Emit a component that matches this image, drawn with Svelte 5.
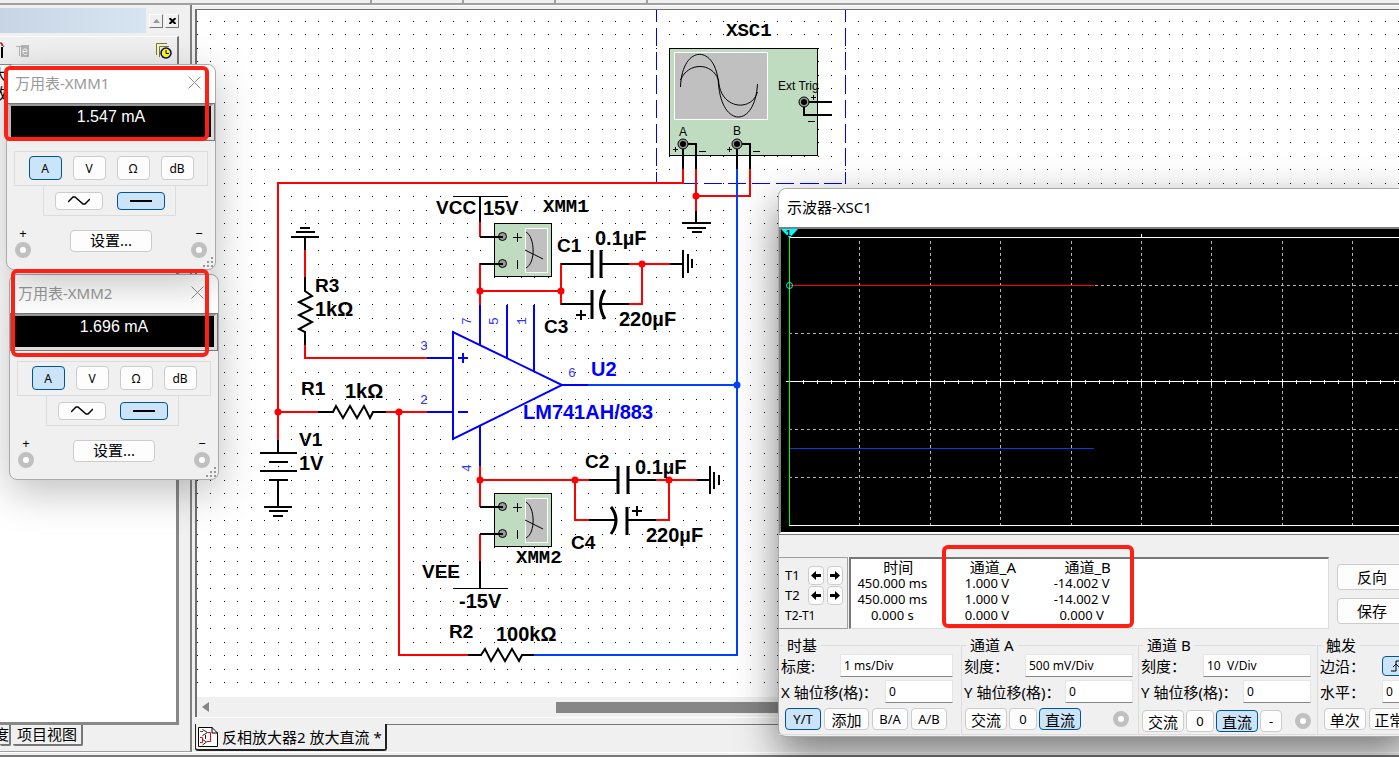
<script>
    let meters = [
        { id: 'one', name: 'XMM1', reading: '1.547 mA' },
        { id: 'two', name: 'XMM2', reading: '1.696 mA' }
    ];
    let ranges = ['A', 'V', 'Ω', 'dB'];

    let readings = [
        ['450.000 ms', '1.000 V', '-14.002 V'],
        ['450.000 ms', '1.000 V', '-14.002 V'],
        ['0.000 s', '0.000 V', '0.000 V']
    ];

    let channels = [
        { id: 'a', title: '通道 A', scale: '500 mV/Div', buttons: ['交流', '0', '直流'] },
        { id: 'b', title: '通道 B', scale: '10  V/Div', buttons: ['交流', '0', '直流', '-'] }
    ];

    // scope divisions
    let cols = [78, 149, 219, 290, 360, 430, 501, 571, 642];
    let rows = [56, 104, 200, 248];
    let ticks = Array.from({ length: 50 }, (_, i) => Math.round(8 + i * 14.08));

    let labels = [
        [436, 214, 'VCC'], [557, 252, 'C1'], [544, 333, 'C3'], [315, 292, 'R3'],
        [301, 395, 'R1'], [299, 446, 'V1'], [585, 468, 'C2'], [571, 549, 'C4'],
        [422, 578, 'VEE'], [449, 638, 'R2']
    ];
    let values = [
        [483, 215, '15V'], [595, 245, '0.1µF'], [619, 326, '220µF'], [315, 316, '1kΩ'],
        [345, 398, '1kΩ'], [299, 470, '1V'], [635, 474, '0.1µF'], [646, 542, '220µF'],
        [459, 608, '-15V'], [496, 641, '100kΩ']
    ];
    let redNodes = [[696, 196], [480, 291], [561, 291], [642, 264], [278, 412], [399, 412], [480, 480], [575, 480], [669, 480]];
</script>

<div class="app">
    <div class="topbar"><i></i><i></i><i></i><i></i></div>
    <div class="work">
        <aside class="side">
            <div class="side__head">
                <div class="side__title"></div>
                <button class="mini mini--off" aria-label="up"><svg width="7" height="4"><path d="M0 4L3.500 0L7 4z" fill="#999"/></svg></button>
                <button class="mini" aria-label="close"><svg width="7" height="6"><path d="M0.500 0L6.500 6M6.500 0L0.500 6" stroke="#000" stroke-width="2"/></svg></button>
            </div>
            <div class="side__tools">
                <svg width="32" height="18">
                    <path d="M2 5V16" stroke="#000" stroke-width="2"/><path d="M0 1H2V4M1 1L4 5" stroke="#a00000" stroke-width="1" fill="none"/>
                    <path d="M16 4.500H23M19.500 4V14" stroke="#b4b4b4"/><rect x="21" y="3" width="8" height="12" fill="#b4b4b4"/>
                    <path d="M23 9.500H27C27 6 23 6 23 9.500C23 13 26 13 27 12" stroke="#fff" fill="none"/>
                </svg>
                <svg width="16" height="16">
                    <path d="M0.500 12V0.500H11M3.500 14V3.500H13M6.500 15V6.500" stroke="#808000" fill="none"/>
                    <circle cx="10" cy="10" r="5" fill="#ff0" stroke="#00008b" stroke-width="1.500"/>
                    <path d="M10 7V10.500H13" stroke="#000" fill="none"/>
                </svg>
            </div>
            <div class="tree"><span>大</span><span>放</span></div>
            <div class="side__tabs">
                <button class="cut">度</button>
                <button>项目视图</button>
            </div>
        </aside>

        <main class="doc">
            <div class="sheet">
                <svg class="schematic" width="100%" height="100%">
                    <defs>
                        <pattern id="dots" x="197" y="21" width="27" height="27" patternUnits="userSpaceOnUse">
                            <path d="M0 0h1v1h-1zM13 0h1v1h-1zM0 13h1v1h-1zM13 13h1v1h-1z" fill="#000"/>
                        </pattern>
                        <g id="xmm">
                            <rect x="0.500" y="0.500" width="57" height="53" fill="#c0dcc0" stroke="#000"/>
                            <rect x="31.500" y="5.500" width="22" height="44" fill="#c0c0c0" stroke="#fff"/>
                            <g fill="#999" stroke="#000"><circle cx="8.500" cy="13.500" r="4"/><circle cx="8.500" cy="40.500" r="4"/></g>
                            <path d="M-14 14H9M-14 41H9" stroke="#000" stroke-width="2"/>
                            <path d="M19 14.500H28M23.500 10V19M23.500 37V46M31 27L49 36M32 9C41 14 42 40 32 45" stroke="#000" fill="none"/>
                        </g>
                        <g id="jack"><circle r="5" fill="#999" stroke="#000"/><circle r="3" fill="#000"/></g>
                    </defs>
                    <g transform="translate(-197 -10)">
                        <rect x="197" y="10" width="4000" height="685" fill="url(#dots)"/>

                        <!-- oscilloscope symbol -->
                        <path d="M656.500 10V183M845.500 10V183" stroke="#00f" stroke-dasharray="18 6" stroke-dashoffset="6"/>
                        <path d="M656 183.500H845" stroke="#00f" stroke-dasharray="18 6"/>
                        <rect x="669.500" y="48.500" width="148" height="107" fill="#c0dcc0" stroke="#000"/>
                        <rect x="674.500" y="52.500" width="93" height="67" fill="#c0c0c0" stroke="#fff"/>
                        <path d="M680.500 87C682 44 716 44 718.500 84C722 128 755 128 757.500 84M680.500 80C688 62 712 62 718.500 80C720 110 752 112 757.500 92" stroke="#000" fill="none"/>
                        <path class="blk" d="M683 144V169M688 144H696V169M737 144V169M742 144H750V169M804 102H832M804 102V115H832"/>
                        <use href="#jack" x="683" y="144"/><use href="#jack" x="737" y="144"/><use href="#jack" x="804" y="102"/>
                        <path d="M673 149.500H678M675.500 147V152M727 149.500H732M729.500 147V152M811 97.500H816M813.500 95V100M699 151.500H706M753 151.500H760M808 121.500H815" stroke="#000"/>
                        <g class="tiny"><text x="679" y="136">A</text><text x="733" y="135">B</text><text x="778" y="90">Ext Trig</text></g>

                        <!-- wires -->
                        <path class="red" d="M683 169V183H278V440M696 169V211M750 169V196H696M480 222V237M480 263V305M480 291H561M561 263V305M629 264H670M642 263V304H629M305 250V277M305 345V358H427M278 412H318M386 412H427M399 412V655H468M480 466V507M480 480H589M575 480V520H589M656 480H697M669 480V520H656M480 534V561"/>
                        <path class="net" d="M737 169V655H534M588 385H737"/>
                        <path class="blue" d="M480 305V345M507 305V358M534 305V372M453 332V439L562 385ZM427 358H453M427 412H453M562 385H588M480 427V466M458 358H468M463 353V363M458 412H468"/>
                        <path class="blk" d="M696 211V223M682 223H711M687 228H706M692 232H702
                            M480 196V222M480 588V561
                            M305 237V250M291 237H319M296 232H315M300 228H310M305 277V291L312 296L299 302L312 309L299 315L312 322L299 329L305 332V345
                            M318 412H333L336 406L343 418L350 406L357 418L364 406L370 418L373 412H386
                            M278 440V453M260 453H297M269 462H288M260 471H297M269 480H288M278 480V507M264 507H292M269 511H288M273 516H283
                            M468 655H481L485 649L491 661L498 649L505 661L512 649L519 661L522 655H534
                            M561 264H592M601 264H629M561 304H592M601 304H629M670 264H683M683 250V278M688 254V273M692 259V268
                            M589 480H618M628 480H656M589 520H616M627 520H656M697 480H710M710 466V494M714 472V489M719 475V485
                            M576 315H586M581 310V320M632 511H642M637 506V516"/>
                        <path d="M453 196.500H508M453 588.500H508" stroke="#000"/>
                        <path class="plate" d="M592 250V278M601 250V278M592 290V319M605 290Q596 304 605 319M618 466V494M628 466V494M627 507V535M611 507Q621 520 611 534"/>
                        <g fill="red">
                            {#each redNodes as n}
                                <circle cx={n[0]} cy={n[1]} r="3.500"/>
                            {/each}
                        </g>
                        <circle cx="737" cy="385" r="3.500" fill="#0040ff"/>
                        <use href="#xmm" x="494" y="223"/>
                        <use href="#xmm" x="494" y="493"/>

                        <g class="name">
                            {#each labels as l}
                                <text x={l[0]} y={l[1]}>{l[2]}</text>
                            {/each}
                        </g>
                        <g class="name value">
                            {#each values as v}
                                <text x={v[0]} y={v[1]}>{v[2]}</text>
                            {/each}
                        </g>
                        <g class="name value part"><text x="591" y="376">U2</text><text x="523" y="419">LM741AH/883</text></g>
                        <g class="inst"><text x="726" y="36">XSC1</text><text x="543" y="212">XMM1</text><text x="516" y="563">XMM2</text></g>
                        <g class="pin">
                            <text x="420" y="350">3</text><text x="420" y="404">2</text><text x="568" y="377">6</text>
                            <text transform="translate(471 325) rotate(-90)">7</text>
                            <text transform="translate(498 325) rotate(-90)">5</text>
                            <text transform="translate(526 325) rotate(-90)">1</text>
                            <text transform="translate(471 472) rotate(-90)">4</text>
                        </g>
                    </g>
                </svg>
            </div>
            <div class="scroll">
                <svg width="8" height="10"><path d="M7 0V10L0 5z" fill="#868686"/></svg>
                <div class="thumb"></div>
            </div>
            <div class="tabs">
                <button class="tab">
                    <svg width="20" height="20">
                        <path d="M0.500 0.500H14L19.500 6V19.500H0.500z" fill="#fff" stroke="#000"/><path d="M14 0V6H20" fill="none" stroke="#000"/>
                        <path d="M2 4.500H5M2 10.500H4.500V15.500H2M10 5.500H12.500V14.500H9" stroke="#f00" fill="none"/>
                        <path d="M4.500 2.500L9.500 5.500L4.500 8.500M4.500 12.500L8.500 15L4.500 18M7.500 8V12" stroke="#222" fill="none"/>
                    </svg>
                    反相放大器2 放大直流 *
                </button>
                <div class="tabs__rest"></div>
            </div>
        </main>
    </div>
    <div class="status"></div>

    {#each meters as m}
        <section class="window meter meter--{m.id}">
            <header class="window__title">
                <span>万用表-{m.name}</span>
                <button class="close" aria-label="close"><svg width="13" height="13"><path d="M0.500 0.500L12.500 12.500M12.500 0.500L0.500 12.500" stroke="#8c8c8c"/></svg></button>
            </header>
            <output class="lcd">{m.reading}</output>
            <div class="ranges">
                {#each ranges as r}
                    <button class="btn" class:on={r == 'A'}>{r}</button>
                {/each}
            </div>
            <div class="modes">
                <button class="btn" aria-label="AC"><svg width="22" height="9"><path d="M0 6L5 1H7L15 8H17L22 3" fill="none" stroke="#000" stroke-width="1.500"/></svg></button>
                <button class="btn on" aria-label="DC"><svg width="22" height="2"><path d="M0 1H22" stroke="#000" stroke-width="2"/></svg></button>
            </div>
            <div class="foot">
                <div class="pole"><span>+</span><input type="radio" aria-label="plus"></div>
                <button class="btn set">设置...</button>
                <div class="pole"><span>−</span><input type="radio" aria-label="minus"></div>
            </div>
            <svg class="grip" width="12" height="12"><path d="M8 0h2v2h-2zM4 4h2v2h-2zM8 4h2v2h-2zM0 8h2v2h-2zM4 8h2v2h-2zM8 8h2v2h-2z" fill="#999"/></svg>
        </section>
    {/each}

    <section class="window scope">
        <header class="window__title">示波器-XSC1</header>
        <div class="screen">
            <svg width="100%" height="303">
                <g stroke="#b4b4b4" fill="none">
                    {#each cols as x}
                        <path d="M{x}.5 12V296" stroke-dasharray="3 3"/>
                    {/each}
                    {#each rows as y}
                        <path d="M8 {y}.5H900" stroke-dasharray="3 3"/>
                    {/each}
                </g>
                <g stroke="#fff">
                    <path d="M8 8.500H900M8 296.500H900M5 152.500H900M360.500 5V8"/>
                    {#each ticks as t}
                        <path d="M{t}.5 151V155"/>
                    {/each}
                    {#each cols as x}
                        <path d="M{x}.5 150V157"/>
                    {/each}
                </g>
                <path d="M8 56.500H313" stroke="#f00"/>
                <path d="M8 219.500H313" stroke="#0040e0"/>
                <path d="M8.500 8V296" stroke="#0f0"/>
                <path d="M0 0H17L8.500 9z" fill="#0ff"/>
                <text class="cursor" x="5" y="7">1</text>
                <circle cx="8.500" cy="56.500" r="3" fill="none" stroke="#0ff"/>
            </svg>
        </div>
        <div class="readout">
            <div class="cursors">
                {#each ['T1', 'T2'] as t}
                    <div class="cursors__row">
                        <span>{t}</span>
                        <button class="btn" aria-label="{t} left"><svg width="10" height="9"><path d="M0 4.500L5 0V3H10V6H5V9z"/></svg></button>
                        <button class="btn" aria-label="{t} right"><svg width="10" height="9"><path d="M10 4.500L5 0V3H0V6H5V9z"/></svg></button>
                    </div>
                {/each}
                <div class="diff">T2-T1</div>
            </div>
            <div class="sheetbox">
                <table>
                    <thead><tr><th>时间</th><th>通道_A</th><th>通道_B</th></tr></thead>
                    <tbody>
                        {#each readings as r}
                            <tr>{#each r as c}<td>{c}</td>{/each}</tr>
                        {/each}
                    </tbody>
                </table>
            </div>
            <div class="actions">
                <button class="btn">反向</button>
                <button class="btn">保存</button>
            </div>
        </div>
        <div class="groups">
            <fieldset class="time">
                <legend>时基</legend>
                <div class="line"><label for="tb">标度:</label><input id="tb" class="wide" value="1 ms/Div"></div>
                <div class="line"><label for="tx">X 轴位移(格)：</label><input id="tx" value="0"></div>
                <div class="keys">
                    <button class="btn on">Y/T</button><button class="btn zh">添加</button><button class="btn">B/A</button><button class="btn">A/B</button>
                </div>
            </fieldset>
            {#each channels as ch}
                <fieldset class="ch ch--{ch.id}">
                    <legend>{ch.title}</legend>
                    <div class="line"><label for="s{ch.id}">刻度：</label><input id="s{ch.id}" class="wide" value={ch.scale}></div>
                    <div class="line"><label for="y{ch.id}">Y 轴位移(格)：</label><input id="y{ch.id}" value="0"></div>
                    <div class="keys">
                        {#each ch.buttons as b}
                            <button class="btn" class:zh={b.length > 1} class:on={b == '直流'}>{b}</button>
                        {/each}
                        <input type="radio" aria-label={ch.title}>
                    </div>
                </fieldset>
            {/each}
            <fieldset class="trig">
                <legend>触发</legend>
                <div class="line"><span>边沿：</span><button class="btn on" aria-label="rising edge"><svg width="10" height="12"><path d="M0 11H5V1H10M2 7L5 4L8 7" fill="none" stroke="#000"/></svg></button></div>
                <div class="line"><label for="lv">水平：</label><input id="lv" value="0"></div>
                <div class="keys"><button class="btn zh">单次</button><button class="btn zh">正常</button></div>
            </fieldset>
        </div>
    </section>

    <div class="mark mark--one"></div>
    <div class="mark mark--two"></div>
    <div class="mark mark--three"></div>
</div>

<style>
    :global(body){
        margin: 0;
    }
    .app, .app *{
        box-sizing: border-box;
    }
    .app{
        height: 100vh;
        position: relative;
        overflow: hidden;
        display: flex;
        flex-direction: column;
        background: #f0f0f0;
        color: #000;
        font: 13px "Noto Sans", "Noto Sans CJK SC", sans-serif;
    }
    button, input{
        font: inherit;
        color: inherit;
        padding: 0;
        margin: 0;
    }
    svg{
        display: block;
        flex: none;
    }
    .topbar{
        height: 5px;
        border-bottom: 2px solid #a0a0a0;
        display: flex;
        padding-left: 370px;
        gap: 90px;
    }
    .topbar i{
        width: 2px;
        background: #a0a0a0;
    }
    .work{
        flex: 1;
        min-height: 0;
        display: flex;
    }
    .side{
        width: 192px;
        border-right: 2px solid #808080;
        border-bottom: 1px solid #a0a0a0;
        display: flex;
        flex-direction: column;
        padding: 3px 11px 5px 0;
    }
    .side__head{
        display: flex;
        gap: 2px;
        align-items: center;
        height: 25px;
    }
    .side__title{
        flex: 1;
        height: 25px;
        margin-right: 1px;
        background: linear-gradient(90deg, #c8d5e4, #d7e4f2);
    }
    .mini{
        width: 14px;
        height: 14px;
        display: flex;
        align-items: center;
        justify-content: center;
        background: #f0f0f0;
        border: 1px solid;
        border-color: #fff #777 #777 #fff;
    }
    .side__tools{
        height: 28px;
        margin-top: 3px;
        border-top: 1px solid #fff;
        border-right: 2px solid #777;
        display: flex;
        justify-content: space-between;
        align-items: center;
        padding-right: 5px;
    }
    .tree{
        flex: 1;
        background: #fff;
        border: solid #888;
        border-width: 1px 3px 3px 0;
        display: flex;
        flex-direction: column;
        font-size: 15px;
        line-height: 19px;
    }
    .tree span{
        text-indent: -8px;
    }
    .side__tabs{
        display: flex;
        gap: 2px;
        height: 21px;
    }
    .side__tabs button{
        background: #f0f0f0;
        border: solid #777;
        border-width: 0 2px 2px 0;
        border-radius: 0 0 2px 2px;
        width: 70px;
        font-size: 15px;
        line-height: 19px;
        white-space: nowrap;
    }
    .side__tabs .cut{
        width: 11px;
        direction: rtl;
        overflow: hidden;
    }
    .doc{
        flex: 1;
        min-width: 0;
        display: flex;
        flex-direction: column;
        padding: 3px 0 0 3px;
        border-top: 1px solid #fff;
    }
    .sheet{
        flex: 1;
        min-height: 0;
        overflow: hidden;
        background: #fff;
        border: solid #707070;
        border-width: 1px 0 0 2px;
    }
    .schematic{
        overflow: hidden;
    }
    .blk, .red, .net, .blue{
        fill: none;
        stroke: #000;
        stroke-width: 2;
    }
    .red{stroke: #f00}
    .net{stroke: #0040ff}
    .blue{stroke: #00f}
    .plate{
        fill: none;
        stroke: #000;
        stroke-width: 3;
    }
    .name{
        font: bold 19px "Liberation Sans", Arial, sans-serif;
    }
    .value{
        font-size: 20px;
    }
    .part{
        fill: #00f;
    }
    .inst{
        font: bold 19px "Liberation Mono", "Courier New", monospace;
    }
    .tiny{
        font: 12px "Liberation Sans", Arial, sans-serif;
    }
    .pin{
        font: 13px "Liberation Mono", monospace;
        fill: #33f;
    }
    .scroll{
        height: 20px;
        border-left: 2px solid #707070;
        display: flex;
        align-items: center;
        padding-left: 5px;
    }
    .thumb{
        height: 11px;
        width: 40%;
        margin-left: 346px;
        background: #868686;
    }
    .tabs{
        height: 35px;
        border-top: 1px solid #fff;
        padding-top: 6px;
        display: flex;
    }
    .tab{
        height: 27px;
        background: #f0f0f0;
        border: solid #222;
        border-width: 0 2px 2px 1px;
        border-radius: 0 0 3px 3px;
        display: flex;
        gap: 4px;
        align-items: center;
        padding: 0 3px 0 2px;
        font-size: 15px;
        white-space: nowrap;
    }
    .tabs__rest{
        flex: 1;
        border-top: 1px solid #777;
    }
    .status{
        height: 5px;
        border-top: 1px solid #fff;
        border-bottom: 2px solid #777;
    }

    .window{
        position: absolute;
        background: #f0f0f0;
        border: 1px solid #aaa;
        border-radius: 8px;
        display: flex;
        flex-direction: column;
    }
    .window__title{
        height: 38px;
        flex: none;
        background: #fff;
        border-radius: 8px 8px 0 0;
        display: flex;
        align-items: center;
        justify-content: space-between;
        padding: 0 14px 4px 8px;
        font-size: 15px;
    }
    .meter{
        width: 210px;
        box-shadow: 0 12px 40px rgba(0, 0, 0, .25);
    }
    .meter--one{
        left: 6px;
        top: 64px;
        z-index: 2;
    }
    .meter--two{
        left: 9px;
        top: 274px;
        z-index: 1;
    }
    .meter .window__title{
        color: #999;
    }
    .close{
        border: 0;
        background: none;
    }
    .lcd{
        height: 38px;
        background: #000;
        color: #fff;
        border: solid #999;
        border-width: 3px 4px 4px 4px;
        border-color: #999 #ddd #ddd #bbb;
        outline: 1px solid #777;
        outline-offset: -1px;
        text-align: center;
        font: 16px/22px "Liberation Sans", Arial, sans-serif;
    }
    .btn{
        background: #fdfdfd;
        border: 1px solid #ccc;
        border-radius: 4px;
        display: flex;
        align-items: center;
        justify-content: center;
        white-space: nowrap;
    }
    .on{
        background: #cce4f7;
        border-color: #005499;
    }
    .ranges{
        margin: 10px 7px 0;
        height: 35px;
        border: 1px solid #dcdcdc;
        display: flex;
        gap: 11px;
        justify-content: center;
        align-items: center;
        padding-bottom: 1px;
    }
    .ranges .btn{
        width: 33px;
        height: 24px;
        font-size: 12px;
    }
    .modes{
        width: 133px;
        margin-left: 36px;
        height: 30px;
        border: 1px solid #dcdcdc;
        border-top: 0;
        display: flex;
        justify-content: space-between;
        align-items: center;
        padding: 0 10px 0 11px;
    }
    .modes .btn{
        width: 48px;
        height: 18px;
    }
    .foot{
        display: flex;
        justify-content: space-between;
        align-items: center;
        padding: 4px 8px 8px;
        height: 53px;
    }
    .set{
        width: 82px;
        height: 22px;
        font-size: 15px;
        padding-bottom: 2px;
    }
    .pole{
        display: flex;
        flex-direction: column;
        align-items: center;
        line-height: 18px;
    }
    input[type=radio]{
        appearance: none;
        width: 16px;
        height: 16px;
        border: 5px solid #c0c0c0;
        border-radius: 50%;
        background: #fff;
    }
    .grip{
        position: absolute;
        right: 0;
        bottom: 0;
    }

    .scope{
        left: 778px;
        right: -12px;
        top: 188px;
        box-shadow: 0 16px 40px rgba(0, 0, 0, .5);
        z-index: 3;
    }
    .screen{
        background: #000;
        border: solid #808080;
        border-width: 2px 0 2px 2px;
        border-bottom-color: #fff;
        overflow: hidden;
    }
    .readout{
        border-top: 1px solid #777;
        display: flex;
        padding: 22px 0 0;
        height: 96px;
    }
    .cursor{
        font: bold 9px "Liberation Sans", sans-serif;
    }
    .cursors{
        width: 69px;
        height: 72px;
        border: 1px solid #a0a0a0;
        border-left: 0;
        padding: 7px 4px 0 6px;
    }
    .cursors__row{
        display: flex;
        gap: 3px;
        height: 20px;
        align-items: center;
    }
    .cursors__row span{
        width: 20px;
    }
    .cursors__row .btn{
        width: 16px;
        height: 19px;
    }
    .diff{
        font-size: 12px;
        line-height: 22px;
    }
    .sheetbox{
        width: 480px;
        height: 72px;
        margin-left: 1px;
        background: #fff;
        border: solid;
        border-width: 2px 1px 1px 2px;
        border-color: #777 #ddd #ddd #777;
    }
    table{
        table-layout: fixed;
        width: 284px;
        border-collapse: collapse;
    }
    th, td{
        padding: 0 12px 0 0;
        height: 16px;
        line-height: 16px;
        text-align: center;
        font-weight: normal;
        white-space: nowrap;
    }
    th{
        padding: 0;
        font-size: 15px;
    }
    .actions{
        flex: 1;
        margin-left: 8px;
        padding-top: 7px;
        display: flex;
        flex-direction: column;
        gap: 8px;
    }
    .actions .btn{
        width: 70px;
        height: 26px;
        padding-bottom: 2px;
        font-size: 15px;
    }
    .groups{
        display: flex;
        gap: 1px;
        height: 106px;
        padding: 6px 0 1px;
    }
    fieldset{
        margin: 0;
        min-width: 0;
        border: 1px solid #dcdcdc;
        border-right: 0;
        padding: 0 4px 0 2px;
        flex: none;
    }
    legend{
        margin-left: 2px;
        padding: 0 4px;
        font-size: 15px;
        line-height: 18px;
    }
    .time{width: 181px; padding-right: 7px; border-left: 0}
    .ch--a{width: 176px}
    .ch--b{width: 178px; padding-right: 5px}
    .trig{flex: 1; padding-right: 0}
    .line{
        display: flex;
        justify-content: space-between;
        align-items: center;
        height: 23px;
        margin-bottom: 3px;
        font-size: 15px;
        white-space: nowrap;
    }
    .line input{
        width: 68px;
        height: 23px;
        flex: none;
        background: #fff;
        border: 1px solid #e5e5e5;
        border-bottom-color: #868686;
        padding-left: 3px;
        font-size: 12px;
    }
    .line .wide{
        width: 108px;
    }
    .time .wide{
        width: 113px;
    }
    .keys{
        display: flex;
        gap: 3px;
        padding: 2px 0 0 4px;
    }
    .ch .keys{
        padding-left: 1px;
        gap: 2px;
        align-items: center;
    }
    .ch--a .keys{
        padding-right: 4px;
    }
    .ch--b .keys{
        padding-top: 4px;
    }
    .keys .btn{
        min-width: 28px;
        height: 22px;
        padding: 0 5px;
        font-size: 13px;
    }
    .keys .zh{
        width: 42px;
        font-size: 15px;
    }
    .ch--b .keys .btn:nth-child(4){
        min-width: 22px;
    }
    .keys input{
        margin-left: auto;
    }
    .time .btn{
        width: 36px;
    }
    .time .zh{
        width: 45px;
    }
    .trig .line{
        justify-content: flex-start;
        gap: 17px;
    }
    .trig .line .btn{
        width: 30px;
        height: 20px;
    }

    .mark{
        position: absolute;
        border: 4px solid #ff2015;
        border-radius: 6px;
        z-index: 4;
    }
    .mark--one{left: 4px; top: 66px; width: 205px; height: 75px}
    .mark--two{left: 11px; top: 269px; width: 198px; height: 88px}
    .mark--three{left: 942px; top: 545px; width: 192px; height: 83px}
</style>
